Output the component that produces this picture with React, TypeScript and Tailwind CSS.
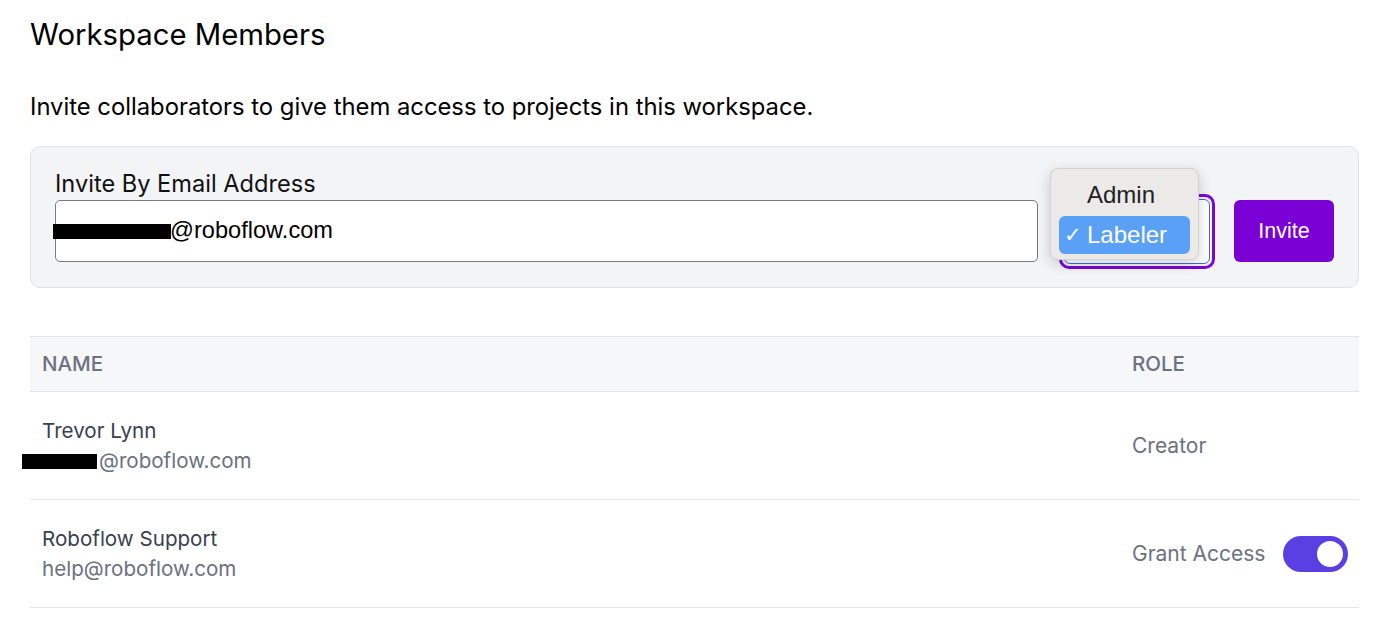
const members = [
  { name: 'Trevor Lynn', email: '@roboflow.com', redacted: true, role: 'Creator' },
  { name: 'Roboflow Support', email: 'help@roboflow.com', redacted: false, role: 'Grant Access' },
];

function Toggle() {
  return (
    <div className="flex h-[36px] w-[65px] shrink-0 items-center justify-end rounded-full bg-[#5a3fe3] px-[3px]">
      <div className="h-[30px] w-[30px] rounded-full border-2 border-[#5a3fe3] bg-white" />
    </div>
  );
}

function RoleSelect() {
  return (
    <div className="relative -my-[6.5px] ml-[21px] h-[75px] w-[156px] rounded-[10px] border-[3px] border-[#7a06d8] p-[2px]">
      <div className="h-full w-full rounded-[6px] border border-[#3b6fe0] bg-white" />
      {/* open native menu */}
      <div className="absolute left-[-12px] top-[-29px] z-10 h-[92px] w-[149px] rounded-[8px] border border-[#d4d2d2] bg-[#ece9e9] px-[8px] pt-[7px] shadow-[0_4px_14px_rgba(0,0,0,0.18)] font-['Liberation_Sans',Arial,sans-serif] text-[24px] leading-none">
        <div className="flex h-[38px] items-center pl-[5px] text-[#222]">
          <span className="invisible mr-[5px] text-[21px]">✓</span>
          Admin
        </div>
        <div className="mt-[2px] flex h-[38px] items-center rounded-[6px] bg-[#5aa0f7] pl-[5px] text-white">
          <span className="mr-[5px] text-[21px]">✓</span>
          Labeler
        </div>
      </div>
    </div>
  );
}

export default function App() {
  return (
    <div className="min-h-screen bg-white px-[30px] pt-[17px] font-['Inter',sans-serif] text-black">
      <h1 className="text-[29.3px] leading-[36px] font-normal">Workspace Members</h1>
      <p className="mt-[38px] text-[23.8px] leading-[32px]">
        Invite collaborators to give them access to projects in this workspace.
      </p>

      {/* Invite panel */}
      <div className="mt-[23px] rounded-[10px] border border-[#e0e2e6] bg-[#f3f4f6] px-[24px] pb-[25px] pt-[24px]">
        <label className="block text-[23.6px] leading-[26px] text-[#111]">Invite By Email Address</label>
        <div className="mt-[3px] flex items-center">
          <div className="relative flex h-[62px] flex-1 items-center rounded-[5px] border border-[#7b7b7b] bg-white pl-[114px] font-['Liberation_Sans',Arial,sans-serif] text-[23.6px] text-black">
            <span className="absolute left-[-3px] top-[23px] h-[15px] w-[118px] bg-black" />
            @roboflow.com
          </div>
          <RoleSelect />
          <button className="ml-[19px] h-[62px] w-[100px] rounded-[6px] bg-[#7a00d6] font-['Liberation_Sans',Arial,sans-serif] text-[21.5px] text-white">
            Invite
          </button>
        </div>
      </div>

      {/* Members table */}
      <div className="mt-[48px]">
        <div className="flex h-[56px] items-center border-y border-[#e2e4e8] bg-[#f6f7f8] px-[12px] text-[20.5px] font-medium text-[#6b7280]">
          <div className="flex-1">NAME</div>
          <div className="w-[215px]">ROLE</div>
        </div>
        {members.map(m => (
          <div key={m.name} className="flex h-[108px] items-center border-b border-[#e2e4e8] px-[12px] text-[20.6px]">
            <div className="flex-1">
              <div className="leading-[30px] text-[#374151]">{m.name}</div>
              <div className="leading-[30px] text-[#6b7280]">
                {m.redacted && (
                  <span className="mr-[2px] ml-[-20px] inline-block h-[15px] w-[75px] translate-y-[1px] bg-black" />
                )}
                {m.email}
              </div>
            </div>
            <div className="flex w-[215px] items-center whitespace-nowrap text-[21px] text-[#6b7280]">
              <span>{m.role}</span>
              {m.role === 'Grant Access' && <span className="ml-[18px]"><Toggle /></span>}
            </div>
          </div>
        ))}
      </div>
    </div>
  );
}
